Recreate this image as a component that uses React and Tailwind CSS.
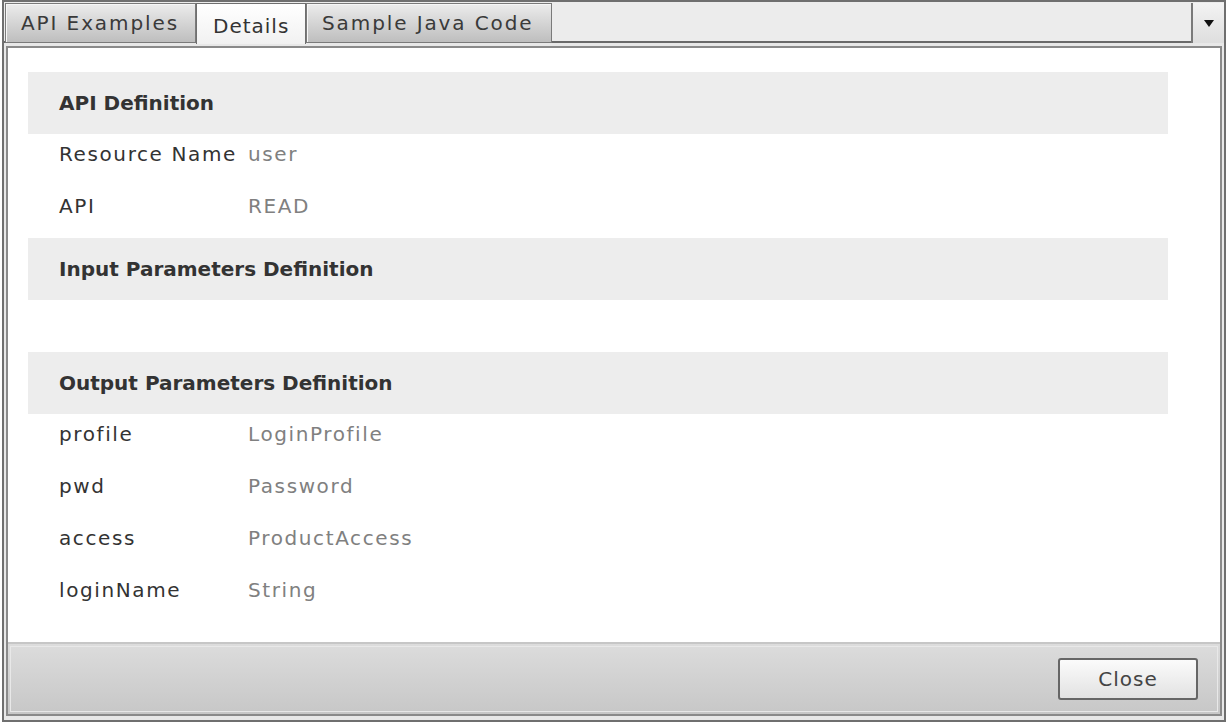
import React from "react";

const font = { fontFamily: '"DejaVu Sans", Verdana, sans-serif' };

const sections = [
  {
    title: "API Definition",
    rows: [
      ["Resource Name", "user"],
      ["API", "READ"],
    ],
  },
  { title: "Input Parameters Definition", rows: [], blank: true },
  {
    title: "Output Parameters Definition",
    rows: [
      ["profile", "LoginProfile"],
      ["pwd", "Password"],
      ["access", "ProductAccess"],
      ["loginName", "String"],
    ],
  },
];

function Tab({ label, active, width }) {
  if (active) {
    return (
      <div
        className={`${width} h-[41px] -mb-[2px] relative z-10 flex items-center pl-[16px] pt-[3px] border-x border-t border-[#6f6f6f] bg-gradient-to-b from-white to-[#f1f1f1] text-[20px] tracking-[1px] text-[#333]`}
      >
        {label}
      </div>
    );
  }
  return (
    <div
      className={`${width} h-[40px] flex items-center pl-[15px] border border-[#7a7a7a] bg-gradient-to-b from-[#ececec] to-[#bebebe] text-[20px] tracking-[1.9px] text-[#3a3a3a] shadow-[inset_1px_1px_0_#f6f6f6]`}
    >
      {label}
    </div>
  );
}

export default function App() {
  return (
    <div className="w-[1228px] h-[724px] bg-white" style={font}>
      <div className="ml-[2px] w-[1224px] h-[722px] border-2 border-[#6f6f6f] bg-[#e8e8e8] flex flex-col">
        {/* Tab strip */}
        <div className="h-[41px] flex items-start pl-[1px] pt-[1px] bg-[#ececec] border-b-2 border-[#6a6a6a]">
          <Tab label="API Examples" width="w-[191px]" />
          <Tab label="Details" width="w-[110px]" active />
          <Tab label="Sample Java Code" width="w-[246px]" />
          <div className="flex-1" />
          <div className="w-[33px] h-[40px] flex items-center justify-center border-l-2 border-[#7a7a7a] bg-gradient-to-b from-[#f3f3f3] to-[#dedede]">
            <svg width="10" height="7" viewBox="0 0 10 7">
              <path d="M0 0 H10 L5 7 Z" fill="#111" />
            </svg>
          </div>
        </div>

        {/* Main panel */}
        <div className="flex-1 mt-[3px] mx-[2px] mb-[4px] border-2 border-[#8a8a8a] flex flex-col">
          <div className="flex-1 bg-white pt-[24px] pl-[20px]">
            {sections.map((s) => (
              <div key={s.title}>
                <div className="w-[1140px] h-[62px] bg-[#ededed] flex items-center pl-[31px] text-[20px] font-bold text-[#333]">
                  {s.title}
                </div>
                {s.rows.map(([k, v]) => (
                  <div key={k} className="h-[52px] flex pl-[31px] pt-[8px] text-[20px] leading-[24px] tracking-[1.6px]">
                    <span className="w-[189px] text-[#333]">{k}</span>
                    <span className="text-[#808080]">{v}</span>
                  </div>
                ))}
                {s.blank && <div className="h-[52px]" />}
              </div>
            ))}
          </div>

          {/* Footer */}
          <div className="h-[72px] border-t-2 border-[#c6c6c6] bg-gradient-to-b from-[#dcdcdc] to-[#c7c7c7] p-[2px]">
            <div className="h-full border border-[#e8e8e8] flex items-start justify-end pt-[11px] pr-[19px]">
              <button className="w-[140px] h-[42px] border-2 border-[#666] rounded-[3px] bg-gradient-to-b from-[#fbfbfb] to-[#e2e2e2] text-[20px] tracking-[1px] text-[#444]">
                Close
              </button>
            </div>
          </div>
        </div>
      </div>
    </div>
  );
}
